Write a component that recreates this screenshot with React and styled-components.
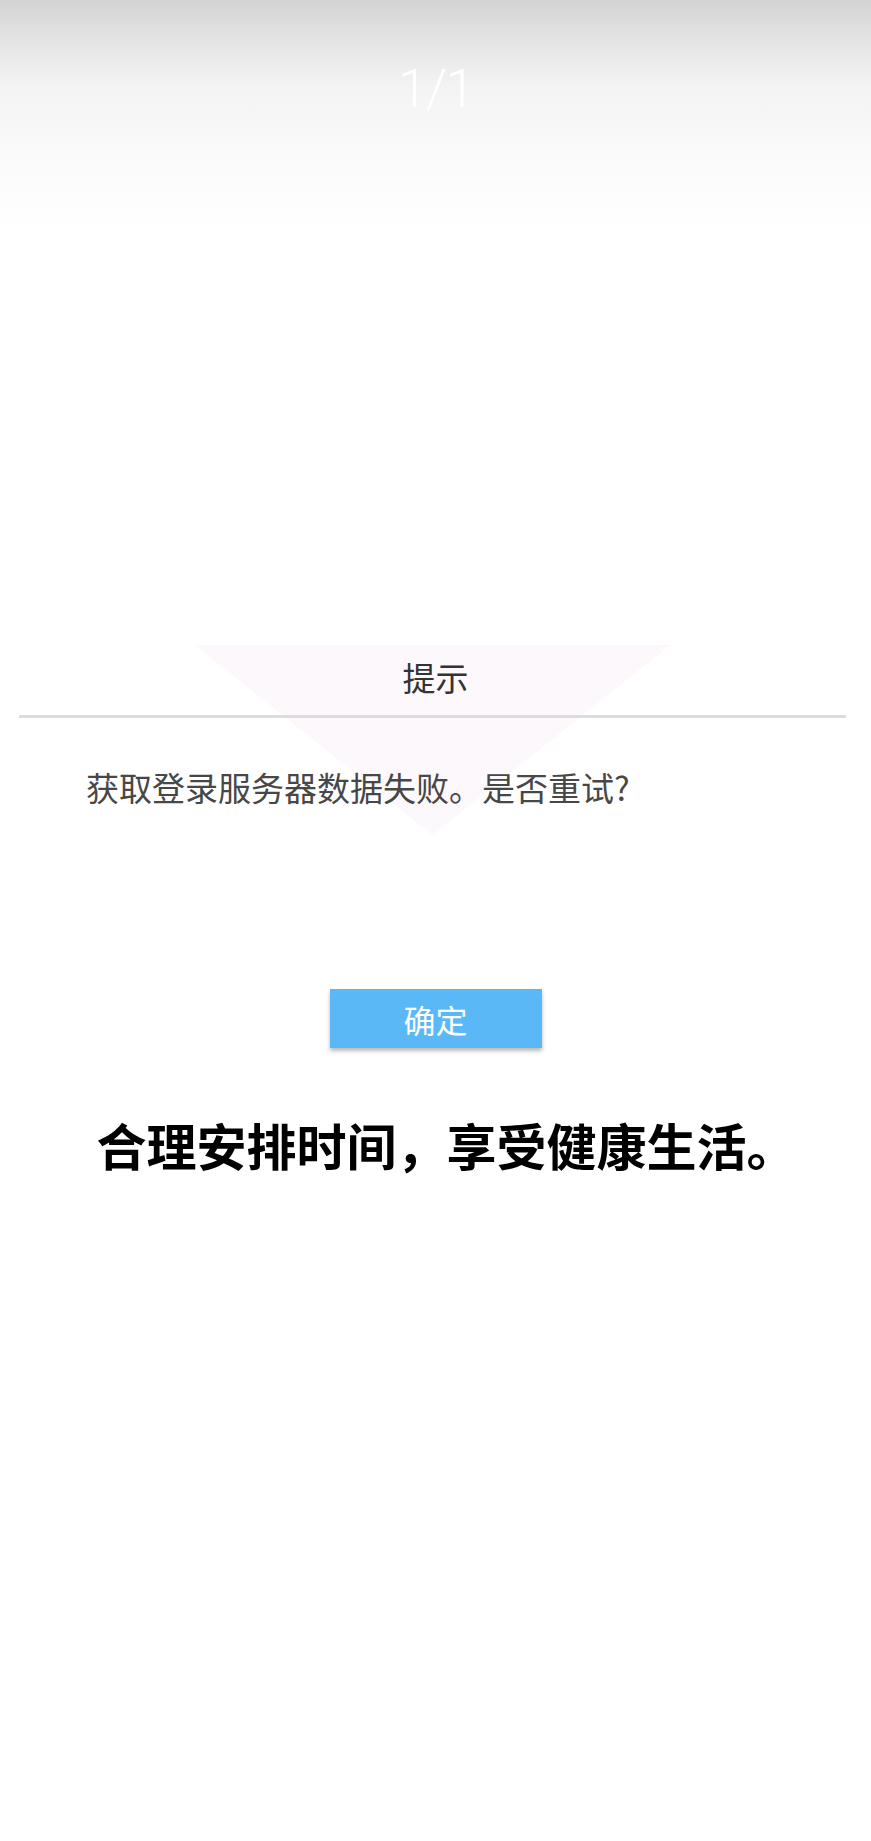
import React from "react";
import styled, { createGlobalStyle } from "styled-components";

const GlobalStyle = createGlobalStyle`
  html, body {
    margin: 0;
    padding: 0;
    background: #ffffff;
  }
  body {
    font-family: "Noto Sans CJK SC", "Noto Sans", Roboto, sans-serif;
  }
`;

const Page = styled.div`
  min-height: 1841px;
  background: #ffffff;
  display: flex;
  flex-direction: column;
`;

const TopBar = styled.div`
  height: 235px;
  display: flex;
  justify-content: center;
  align-items: flex-start;
  padding-top: 62px;
  box-sizing: border-box;
  background: linear-gradient(
    #d3d3d3 0px,
    #e4e4e4 40px,
    #f3f3f3 85px,
    #f9f9f9 140px,
    #ffffff 235px
  );
`;

const Counter = styled.div`
  font-family: Roboto, "Liberation Sans", sans-serif;
  font-weight: 300;
  font-size: 54px;
  line-height: 54px;
  color: #ffffff;
  letter-spacing: -2px;
`;

const Dialog = styled.div`
  position: relative;
  margin-top: 410px;
  padding-top: 16px;

  &::before {
    content: "";
    position: absolute;
    top: 0;
    left: calc(50% - 241px);
    width: 476px;
    height: 190px;
    background: #fcf8fb;
    clip-path: polygon(0 0, 100% 0, 50% 100%);
  }
`;

const DialogTitle = styled.div`
  position: relative;
  text-align: center;
  font-size: 33px;
  line-height: 33px;
  color: #333333;
  padding-bottom: 21px;
`;

const Divider = styled.div`
  position: relative;
  height: 3px;
  margin: 0 25px 0 19px;
  background: #dcdcdc;
`;

const DialogMessage = styled.div`
  position: relative;
  padding: 53px 86px 0;
  font-size: 33px;
  line-height: 33px;
  color: #474747;
`;

const ButtonRow = styled.div`
  display: flex;
  justify-content: center;
  margin-top: 185px;
`;

const ConfirmButton = styled.button`
  width: 212px;
  height: 59px;
  border: none;
  border-radius: 0;
  background: #5ab8f7;
  color: #ffffff;
  font-family: "Noto Sans CJK SC", sans-serif;
  font-size: 32px;
  box-shadow: 0 3px 4px rgba(0, 0, 0, 0.28);
  padding: 0;
`;

const Slogan = styled.div`
  margin-top: 71px;
  padding-left: 22px;
  text-align: center;
  font-size: 50px;
  line-height: 50px;
  font-weight: 700;
  color: #000000;
`;

export default function App() {
  return (
    <Page>
      <GlobalStyle />
      <TopBar>
        <Counter>1/1</Counter>
      </TopBar>
      <Dialog>
        <DialogTitle>提示</DialogTitle>
        <Divider />
        <DialogMessage>获取登录服务器数据失败。是否重试?</DialogMessage>
        <ButtonRow>
          <ConfirmButton>确定</ConfirmButton>
        </ButtonRow>
      </Dialog>
      <Slogan>合理安排时间，享受健康生活。</Slogan>
    </Page>
  );
}
